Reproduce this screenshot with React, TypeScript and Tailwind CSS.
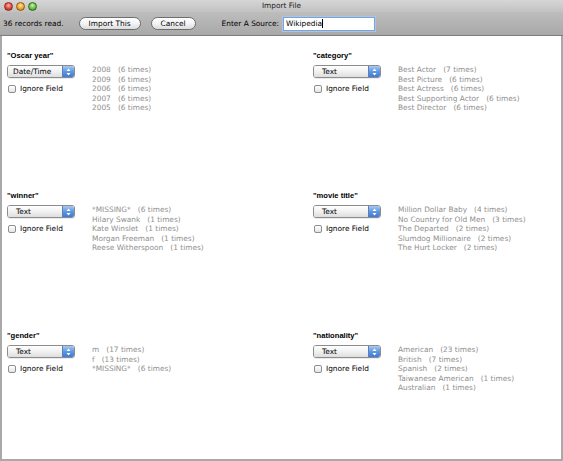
import React from "react";

type Field = {
  title: string;
  type: string;
  pad: string;
  values: [string, string][];
};

const fields: Field[] = [
  {
    title: '"Oscar year"',
    type: "Date/Time",
    pad: "pl-[5px]",
    values: [
      ["2008", "(6 times)"],
      ["2009", "(6 times)"],
      ["2006", "(6 times)"],
      ["2007", "(6 times)"],
      ["2005", "(6 times)"],
    ],
  },
  {
    title: '"category"',
    type: "Text",
    pad: "pl-[8px]",
    values: [
      ["Best Actor", "(7 times)"],
      ["Best Picture", "(6 times)"],
      ["Best Actress", "(6 times)"],
      ["Best Supporting Actor", "(6 times)"],
      ["Best Director", "(6 times)"],
    ],
  },
  {
    title: '"winner"',
    type: "Text",
    pad: "pl-[8px]",
    values: [
      ["*MISSING*", "(6 times)"],
      ["Hilary Swank", "(1 times)"],
      ["Kate Winslet", "(1 times)"],
      ["Morgan Freeman", "(1 times)"],
      ["Reese Witherspoon", "(1 times)"],
    ],
  },
  {
    title: '"movie title"',
    type: "Text",
    pad: "pl-[8px]",
    values: [
      ["Million Dollar Baby", "(4 times)"],
      ["No Country for Old Men", "(3 times)"],
      ["The Departed", "(2 times)"],
      ["Slumdog Millionaire", "(2 times)"],
      ["The Hurt Locker", "(2 times)"],
    ],
  },
  {
    title: '"gender"',
    type: "Text",
    pad: "pl-[8px]",
    values: [
      ["m", "(17 times)"],
      ["f", "(13 times)"],
      ["*MISSING*", "(6 times)"],
    ],
  },
  {
    title: '"nationality"',
    type: "Text",
    pad: "pl-[8px]",
    values: [
      ["American", "(23 times)"],
      ["British", "(7 times)"],
      ["Spanish", "(2 times)"],
      ["Taiwanese American", "(1 times)"],
      ["Australian", "(1 times)"],
    ],
  },
];

function PopupArrows() {
  return (
    <svg width="5" height="8" viewBox="0 0 5 8">
      <path d="M2.5 0.5 L4.5 3 L0.5 3 Z" fill="#ffffff" />
      <path d="M2.5 7.5 L4.5 5 L0.5 5 Z" fill="#ffffff" />
    </svg>
  );
}

function Popup({ label, pad }: { label: string; pad: string }) {
  return (
    <div className="flex h-[13px] w-[68px] rounded-[3px] border border-[#8c8c8c] overflow-hidden shadow-[0_1px_0_rgba(0,0,0,0.08)]">
      <div
        className={`flex-1 flex items-center ${pad} bg-gradient-to-b from-[#ffffff] via-[#f1f1f1] to-[#dedede] text-black leading-none`}
      >
        {label}
      </div>
      <div className="w-[12px] flex items-center justify-center border-l border-[#5a7fb8] bg-gradient-to-b from-[#a9c9f0] via-[#5f97e0] to-[#3d7ad6]">
        <PopupArrows />
      </div>
    </div>
  );
}

function Panel({ f }: { f: Field }) {
  return (
    <div className="h-[140px] flex flex-col">
      <div className="font-bold font-['Liberation_Sans',sans-serif] text-[7.6px] text-black leading-[10px] h-[10px]">
        {f.title}
      </div>
      <div className="flex mt-[4px]">
        <div className="w-[85px] flex flex-col">
          <Popup label={f.type} pad={f.pad} />
          <div className="flex items-center mt-[7px] ml-[1px] h-[8px]">
            <div className="w-[8px] h-[8px] rounded-[2px] border border-[#8e8e8e] bg-gradient-to-b from-[#ffffff] to-[#e4e4e4]" />
            <span className="ml-[4px] text-black leading-none">Ignore Field</span>
          </div>
        </div>
        <div className="flex flex-col text-[#8f8f8f] leading-[9.5px] pt-[0.25px]">
          {f.values.map(([a, b], i) => (
            <div key={i} className="whitespace-pre">
              {a}
              {"   "}
              {b}
            </div>
          ))}
        </div>
      </div>
    </div>
  );
}

export default function App() {
  return (
    <div className="w-[563px] h-[461px] flex flex-col font-['DejaVu_Sans',sans-serif] text-[7.4px] bg-[#a9a9a9] overflow-hidden">
      {/* title bar */}
      <div className="relative shrink-0 h-[12px] flex items-center bg-gradient-to-b from-[#d6d6d6] to-[#c2c2c2]">
        <div className="flex items-center gap-[3px] ml-[4px]">
          <div className="w-[9px] h-[9px] rounded-full bg-[radial-gradient(circle_at_50%_35%,#ffb3a8,#e0443a_55%,#a3201a)] border border-[#8a2a22]" />
          <div className="w-[9px] h-[9px] rounded-full bg-[radial-gradient(circle_at_50%_35%,#ffe2a0,#f2a72b_55%,#b06a0e)] border border-[#8d5a12]" />
          <div className="w-[9px] h-[9px] rounded-full bg-[radial-gradient(circle_at_50%_35%,#c8f0a8,#6cc043_55%,#2f7d1a)] border border-[#2e6a1c]" />
        </div>
        <div className="absolute inset-0 flex items-center justify-center text-[#222] leading-none">
          Import File
        </div>
      </div>
      {/* toolbar */}
      <div className="shrink-0 h-[24px] flex items-center bg-gradient-to-b from-[#bdbdbd] to-[#a9a9a9] border-b border-[#7d7d7d]">
        <span className="ml-[3px] text-black">36 records read.</span>
        <button className="ml-[15px] w-[62px] h-[13px] rounded-full border border-[#6e6e6e] bg-gradient-to-b from-[#ffffff] via-[#f4f4f4] to-[#dcdcdc] text-black leading-none flex items-center justify-center">
          Import This
        </button>
        <button className="ml-[10px] w-[45px] h-[13px] rounded-full border border-[#6e6e6e] bg-gradient-to-b from-[#ffffff] via-[#f4f4f4] to-[#dcdcdc] text-black leading-none flex items-center justify-center">
          Cancel
        </button>
        <span className="ml-[26px] text-black">Enter A Source:</span>
        <div className="ml-[4px] w-[92px] h-[14px] border border-[#7da2ce] bg-white shadow-[0_0_0_1px_#a9c6ea] flex items-center pl-[2px] text-black leading-none">
          Wikipedia
          <span className="inline-block w-[1px] h-[9px] bg-black" />
        </div>
      </div>
      {/* content */}
      <div className="flex-1 min-h-0 overflow-hidden mx-[2px] mb-[2px] bg-white">
        <div className="grid grid-cols-[306px_1fr] pl-[5px] pt-[15px]">
          {fields.map((f, i) => (
            <Panel key={i} f={f} />
          ))}
        </div>
      </div>
    </div>
  );
}
